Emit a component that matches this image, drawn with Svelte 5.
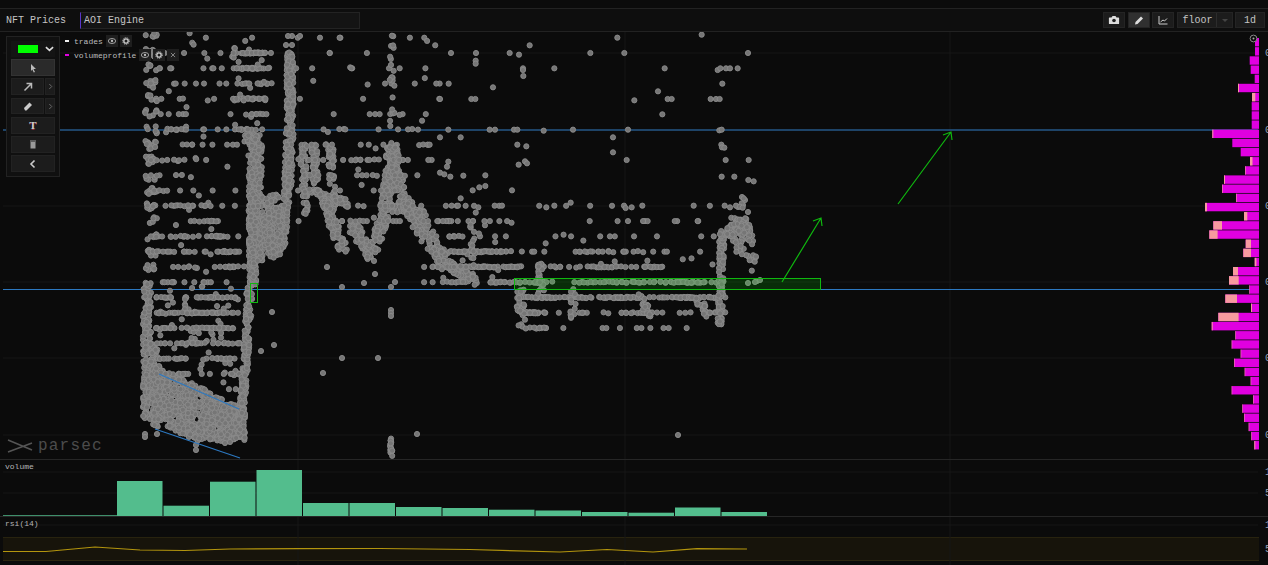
<script lang="ts">
  // seeded random so the scatter stays the same on every load
  let seed = 20231;
  function rnd() {
    seed = (seed + 0x6d2b79f5) | 0;
    let t = Math.imul(seed ^ (seed >>> 15), 1 | seed);
    t = (t + Math.imul(t ^ (t >>> 7), 61 | t)) ^ t;
    return ((t ^ (t >>> 14)) >>> 0) / 4294967296;
  }
  const between = (a: number, b: number) => a + rnd() * (b - a);
  const snap = (y: number) => 53 + Math.round((y - 53) / 15.28) * 15.28;

  const trades: number[][] = [];

  function line(x1, y1, x2, y2, n, jx = 2, jy = 2) {
    for (let i = 0; i < n; i++) {
      const t = rnd();
      trades.push([x1 + (x2 - x1) * t + between(-jx, jx), y1 + (y2 - y1) * t + between(-jy, jy)]);
    }
  }
  function scatter(x1, x2, y1, y2, n, snapped = 0.85) {
    for (let i = 0; i < n; i++) {
      const y = between(y1, y2);
      trades.push([between(x1, x2), rnd() < snapped ? snap(y) : y]);
    }
  }
  function runs(x1, x2, y1, y2, n, maxLen = 4) {
    for (let i = 0; i < n; i++) {
      let x = between(x1, x2);
      const y = snap(between(y1, y2));
      const len = 2 + Math.floor(rnd() * maxLen);
      for (let k = 0; k < len; k++) {
        trades.push([x, y + between(-0.6, 0.6)]);
        x += between(3.5, 6);
      }
    }
  }

  // left wall and bottom blob
  line(147, 282, 147, 420, 190, 4, 2);
  line(154, 340, 156, 425, 80, 3.5, 3);
  for (let i = 0; i < 800; i++) {
    const x = between(152, 245);
    const top = 362 + (x - 152) * 0.52;
    const bottom = x < 195 ? 418 + (x - 152) * 0.55 : 442 - (x - 195) * 0.04;
    trades.push([x, between(top, bottom)]);
  }
  trades.push([196, 450], [196, 445], [145, 434], [145, 437], [157, 434], [225, 443], [230, 442]);
  scatter(156, 240, 284, 385, 190, 0.7);
  runs(156, 225, 284, 360, 26, 3);

  // right side of the drop
  line(250, 285, 241, 432, 210, 3, 2);
  line(253, 285, 252, 200, 130, 3.5, 2);
  line(256, 265, 255, 145, 280, 7, 2);
  line(252, 145, 252, 130, 30, 8, 2);
  runs(236, 262, 52, 130, 22, 3);
  scatter(232, 268, 32, 130, 45, 0.7);
  runs(244, 262, 53, 53, 3, 5);

  // tall column and the W after it
  line(290, 53, 290, 130, 140, 3.5, 2);
  line(290, 130, 287, 205, 110, 4, 2);
  line(285, 205, 282, 250, 70, 3.5, 2);
  line(273, 195, 275, 255, 130, 7, 3);
  line(264, 210, 270, 255, 50, 5, 3);
  line(303, 140, 305, 215, 60, 3, 2);
  line(314, 145, 316, 195, 40, 3, 2);
  line(331, 145, 333, 215, 55, 3, 2);
  line(310, 190, 350, 205, 55, 4, 3);
  line(325, 200, 343, 250, 90, 5, 3);
  line(352, 225, 372, 258, 70, 5, 4);
  line(372, 255, 385, 215, 60, 5, 4);
  line(385, 215, 392, 145, 120, 5, 3);
  line(392, 145, 403, 205, 90, 5, 3);
  line(380, 206, 425, 214, 50, 3, 4);
  line(403, 200, 445, 262, 150, 6, 6);
  line(445, 262, 475, 283, 55, 7, 3);
  runs(300, 420, 130, 235, 14, 2);
  scatter(296, 440, 130, 230, 70, 0.8);
  scatter(296, 440, 32, 128, 40, 0.85);
  trades.push([292, 36], [288, 36], [286, 45], [292, 45], [300, 36]);

  // left column, sparse rows between the walls
  for (const y of [37, 53, 68, 84, 99, 114, 130, 145, 160, 176, 191, 206, 221, 237, 252, 267]) {
    const n = 5 + Math.floor(rnd() * 9);
    for (let k = 0; k < n; k++) trades.push([between(145, 157), y + between(-4, 4)]);
  }
  scatter(158, 240, 32, 280, 120, 0.85);
  runs(145, 232, 206, 270, 26, 3);
  runs(145, 185, 130, 205, 10, 2);

  // stair down into the range
  runs(430, 515, 252, 282, 30, 3);
  scatter(420, 515, 206, 282, 60, 0.7);
  runs(440, 480, 236, 267, 10, 3);
  line(472, 225, 474, 282, 20, 2, 2);

  // the range
  runs(515, 715, 282, 313, 60, 4);
  runs(515, 700, 252, 282, 30, 3);
  scatter(515, 715, 206, 265, 50, 0.85);
  scatter(515, 715, 298, 328, 30, 0.9);
  runs(516, 540, 313, 328, 8, 3);
  runs(615, 650, 313, 313, 3, 5);
  line(520, 290, 522, 330, 30, 4, 2);
  line(541, 263, 541, 292, 22, 3, 2);
  line(573, 290, 573, 320, 14, 3, 2);
  line(640, 295, 650, 318, 22, 4, 2);
  line(695, 295, 708, 315, 24, 4, 2);

  // last push up
  line(720, 325, 722, 235, 110, 2.5, 2);
  line(722, 235, 745, 222, 40, 4, 4);
  line(738, 222, 745, 230, 50, 7, 6);
  line(745, 228, 755, 270, 22, 5, 3);
  line(730, 235, 742, 250, 22, 5, 6);
  trades.push([748, 283], [757, 281], [760, 280], [755, 282], [748, 212], [743, 205], [738, 207], [742, 197], [745, 200]);

  // stray prints
  const strays = [[327, 267], [375, 274], [342, 287], [395, 282], [391, 287], [391, 310], [391, 313], [391, 316], [272, 312], [274, 345], [261, 351], [342, 358], [378, 358], [323, 373], [417, 434], [678, 435], [364, 283]];
  line(391, 440, 391, 456, 20, 1.2, 2);
  trades.push(...strays);
  line(392, 32, 392, 128, 22, 2.5, 2);

  // read off the quiet area around the top right
  const quiet = [[785,14],[532,23],[269,46],[33,69],[108,69],[209,69],[237,74],[451,69],[553,69],[924,69],[107,92],[107,101],[249,115],[249,120],[343,115],[674,115],[833,120],[841,115],[858,115],[870,115],[893,115],[250,138],[26,161],[159,172],[847,161],[654,184],[0,207],[94,207],[106,207],[583,211],[683,207],[695,207],[812,207],[828,207],[839,207],[667,253],[25,299],[149,299],[165,299],[222,299],[232,299],[311,302],[399,299],[564,299],[838,301],[845,299],[0,322],[62,322],[519,322],[232,344],[259,349],[844,344],[846,352],[853,353],[519,367],[560,390],[857,390],[926,390],[25,395],[21,410],[255,394],[261,400],[236,404],[0,428],[13,433],[31,440],[70,437],[136,436],[845,440],[883,440],[925,450],[941,454],[136,468],[118,472],[98,481],[216,481],[62,505],[911,505],[35,527],[54,527],[115,532],[164,527],[186,527],[319,532],[343,527],[392,518],[552,527],[557,534],[575,532],[607,527],[761,527],[854,527],[870,532],[888,527],[905,520],[900,530],[908,533]];
  for (const [x, y] of quiet) trades.push([440 + x / 3, 30 + y / 3]);

  const dots = trades.filter(([x, y]) => y > 30);

  // volume profile: total width, pink part
  const profile = [
    [4, 0], [4, 0], [9.3, 0], [8.3, 0], [4.3, 0], [21, 1], [7, 3.3], [7.3, 0], [7.3, 0], [7.3, 0],
    [46.7, 1], [26.7, 0], [18.3, 0], [9, 2.5], [14, 0.6], [35, 1], [37, 0.6], [23, 0.6], [54, 2], [15, 3.3],
    [45.7, 8.7], [49.7, 8.3], [13.3, 5.3], [15.7, 7.7], [4.3, 1.7], [26, 5], [30, 9.7], [9.7, 0.5], [33.7, 11.7], [8, 1],
    [40.7, 20.3], [47.3, 1], [23.7, 0.5], [27.3, 0.5], [18.3, 0.5], [25, 0.5], [14.3, 0.5], [8.3, 0.5], [27.3, 0.5], [6, 0.5],
    [16.7, 0.5], [15, 0.5], [10.3, 0.5], [7.7, 0.5], [4.7, 1]
  ];

  const chartGrid = [53, 130, 206, 282, 358, 435];
  const verticals = [298, 625, 950];

  const volumeTops = [481, 505.7, 481.7, 470, 503, 503, 507, 508, 509.7, 510.5, 512, 512.7, 507.5, 512];

  const rsi = "3,551.5 46,551.5 95,547 140,550 185,550.5 230,549 300,548.7 380,548.5 470,549.5 560,552 607,549.5 653,552 697,548.7 747,549";

  const tools = ["cursor", "arrow", "pencil", "text", "trash", "back"];
</script>

{#snippet eye()}
  <svg viewBox="0 0 12 12" class="mini"><ellipse cx="6" cy="6" rx="4.4" ry="3" fill="none" stroke="#bbb" stroke-width="1"/><circle cx="6" cy="6" r="1.4" fill="#bbb"/></svg>
{/snippet}
{#snippet gear()}
  <svg viewBox="0 0 12 12" class="mini"><circle cx="6" cy="6" r="2.6" fill="none" stroke="#ccc" stroke-width="1.6"/><circle cx="6" cy="6" r="4" fill="none" stroke="#ccc" stroke-width="1.1" stroke-dasharray="1.3 1.2"/></svg>
{/snippet}

<div class="app">
  <div class="topstrip"></div>
  <header>
    <span class="title">NFT Prices</span>
    <div class="search">AOI Engine</div>
    <div class="actions">
      <button class="btn icon" aria-label="snapshot">
        <svg viewBox="0 0 12 12" width="12" height="12"><path d="M1.5 3.5h2l1-1.5h3l1 1.5h2a.6.6 0 0 1 .6.6v5.3a.6.6 0 0 1-.6.6h-9a.6.6 0 0 1-.6-.6V4.100a.6.6 0 0 1 .6-.6z" fill="#ddd"/><circle cx="6" cy="6.500" r="1.800" fill="#222"/></svg>
      </button>
      <button class="btn icon active" aria-label="draw">
        <svg viewBox="0 0 12 12" width="12" height="12"><path d="M2 10.500l.5-2.500 5.500-5.500 2 2-5.500 5.500z" fill="#ddd"/></svg>
      </button>
      <button class="btn icon" aria-label="chart">
        <svg viewBox="0 0 12 12" width="12" height="12"><path d="M2 2v8h8.500M3.500 8l2.500-2 1.500 1L10 4.500" fill="none" stroke="#ccc" stroke-width="1"/></svg>
      </button>
      <div class="btn select"><span>floor</span><i></i></div>
      <div class="btn period">1d</div>
    </div>
  </header>

  <section class="pane main">
    <svg class="canvas" viewBox="0 32 1268 427" width="1268" height="427">
      {#each chartGrid as y}<line x1="3" x2="1258" y1={y} y2={y} class="grid"/>{/each}
      {#each verticals as x}<line x1={x} x2={x} y1="32" y2="459" class="grid"/>{/each}
      {#each chartGrid as y}<text x="1265" y={y + 3} class="axis">0</text>{/each}

      <line x1="3" x2="1258" y1="130" y2="130" class="level"/>
      <line x1="3" x2="1258" y1="289.500" y2="289.500" class="level"/>

      {#each dots as [x, y]}<circle cx={x} cy={y} r="2.600" class="dot"/>{/each}

      <line x1="159" y1="374" x2="239" y2="409" class="trend"/>
      <line x1="155" y1="429" x2="240" y2="458" class="trend"/>

      <rect x="514.500" y="278.500" width="306" height="11" class="zone"/>
      <rect x="250.500" y="283.500" width="7" height="19" class="zone thin"/>
      <path d="M782 282 821 218M813 221l8-3 1 8" class="arrow"/>
      <path d="M898 204 951 132M943 135l8-3 1 8" class="arrow"/>

      {#each profile as [w, pink], i}
        <g>
          <rect x={1259 - w} y={38 + i * 9.16} width={w} height="8.400" fill="#e000e0"/>
          {#if pink}<rect x={1259 - w} y={38 + i * 9.16} width={pink} height="8.400" fill="#f79a9f"/>{/if}
        </g>
      {/each}

      <circle cx="1253.500" cy="38.500" r="3.400" fill="#0b0b0b" stroke="#888" stroke-width="1"/>
      <circle cx="1253.500" cy="38.500" r="1" fill="#aaa"/>
    </svg>

    <aside class="toolbar">
      <div class="swatch-row">
        <span class="swatch"></span>
        <svg viewBox="0 0 10 6" width="9" height="6"><path d="M1 1l4 3.500L9 1" fill="none" stroke="#ddd" stroke-width="1.800"/></svg>
      </div>
      {#each tools as tool}
        <div class="tool-row">
          <button class="tool" class:selected={tool === "cursor"} aria-label={tool}>
            {#if tool === "cursor"}
              <svg viewBox="0 0 10 10" width="10" height="10"><path d="M3 1l5 5H5.500L7 9 5.800 9.500 4.300 6.500 3 8z" fill="#bbb"/></svg>
            {:else if tool === "arrow"}
              <svg viewBox="0 0 10 10" width="10" height="10"><path d="M1.500 8.500 8 2M3.500 1.500H8.500V6.500" fill="none" stroke="#bbb" stroke-width="1.500"/></svg>
            {:else if tool === "pencil"}
              <svg viewBox="0 0 10 10" width="10" height="10"><path d="M1 7l5.500-5.500 2.500 2.500-5.500 5.500H2z" fill="#ccc"/></svg>
            {:else if tool === "text"}
              <span class="t">T</span>
            {:else if tool === "trash"}
              <svg viewBox="0 0 10 10" width="10" height="10"><path d="M2 1.500h6v1H2zM2.500 3h5v6.500h-5z" fill="#999"/></svg>
            {:else}
              <svg viewBox="0 0 10 10" width="10" height="10"><path d="M6.500 1.500 3 5l3.500 3.500" fill="none" stroke="#ccc" stroke-width="1.600"/></svg>
            {/if}
          </button>
          {#if tool === "arrow" || tool === "pencil"}
            <button class="more" aria-label="more">
              <svg viewBox="0 0 6 8" width="5" height="7"><path d="M1.500 1 4.500 4l-3 3" fill="none" stroke="#777" stroke-width="1"/></svg>
            </button>
          {/if}
        </div>
      {/each}
    </aside>

    <div class="legend">
      <div class="legend-row">
        <i class="dash white"></i><span>trades</span>
        <b>{@render eye()}</b><b>{@render gear()}</b>
      </div>
      <div class="legend-row">
        <i class="dash magenta"></i><span>volumeprofile</span>
        <b>{@render eye()}</b><b>{@render gear()}</b>
        <b><svg viewBox="0 0 12 12" class="mini"><path d="M3.500 3.500l5 5M8.500 3.500l-5 5" stroke="#999" stroke-width="1"/></svg></b>
      </div>
    </div>

    <div class="watermark">
      <svg viewBox="0 0 26 14" width="26" height="14"><path d="M1 1 25 11M1 13 25 4" fill="none" stroke="#555" stroke-width="1.500"/></svg>
      <span>parsec</span>
    </div>
  </section>

  <section class="pane volume">
    <span class="pane-label">volume</span>
    <svg class="canvas" viewBox="0 460 1268 56" width="1268" height="56">
      <line x1="3" x2="1258" y1="472" y2="472" class="grid"/>
      <line x1="3" x2="1258" y1="493" y2="493" class="grid"/>
      {#each verticals as x}<line x1={x} x2={x} y1="460" y2="516" class="grid"/>{/each}
      <text x="1265" y="475" class="axis">1</text>
      <text x="1265" y="496" class="axis">5</text>
      <rect x="3" y="515" width="114" height="1" fill="#3f8f6b"/>
      {#each volumeTops as top, i}
        <rect x={117 + i * 46.500} y={top} width="45.500" height={516 - top} fill="#53bd8d"/>
      {/each}
    </svg>
  </section>

  <section class="pane rsi">
    <span class="pane-label">rsi(14)</span>
    <svg class="canvas" viewBox="0 517 1268 48" width="1268" height="48">
      <rect x="3" y="537" width="1256" height="23" fill="#17140b"/>
      <line x1="3" x2="1259" y1="537.500" y2="537.500" stroke="#28230f"/>
      <line x1="3" x2="1259" y1="560.500" y2="560.500" stroke="#2c2610"/>
      <line x1="3" x2="1258" y1="525" y2="525" class="grid"/>
      {#each verticals as x}<line x1={x} x2={x} y1="517" y2="565" class="grid"/>{/each}
      <text x="1265" y="528" class="axis">1</text>
      <text x="1265" y="552" class="axis">5</text>
      <polyline points={rsi} fill="none" stroke="#b3950e" stroke-width="1.200"/>
    </svg>
  </section>
</div>

<style>
  :global(body) {
    background: #0b0b0b;
  }
  .app {
    width: 1268px;
    height: 565px;
    overflow: hidden;
    display: flex;
    flex-direction: column;
    background: #0b0b0b;
    color: #c8c8c8;
    font-family: "Liberation Mono", monospace;
  }
  .topstrip {
    height: 8px;
    border-bottom: 1px solid #222;
    flex: none;
  }
  header {
    height: 22px;
    flex: none;
    display: flex;
    align-items: center;
    border-bottom: 1px solid #222;
    background: #0e0e0e;
    padding-left: 6px;
    font-size: 10px;
  }
  .title {
    width: 74px;
    color: #c4c4c4;
  }
  .search {
    width: 275px;
    height: 15px;
    line-height: 15px;
    padding-left: 3px;
    background: #141414;
    border: 1px solid #232323;
    border-left: 1px solid #5b36c9;
    color: #c4c4c4;
  }
  .actions {
    margin-left: auto;
    display: flex;
    gap: 2.500px;
    margin-right: 3px;
  }
  .btn {
    height: 16px;
    background: #1c1c1c;
    border: 1px solid #242424;
    box-sizing: border-box;
    padding: 0;
    display: flex;
    align-items: center;
    justify-content: center;
    color: #c4c4c4;
    font-size: 10px;
    font-family: "Liberation Mono", monospace;
  }
  .icon {
    width: 22px;
  }
  .active {
    background: #303030;
  }
  .select {
    width: 56px;
    justify-content: flex-start;
    padding-left: 5px;
    position: relative;
  }
  .select span {
    width: 36px;
  }
  .select i {
    width: 15px;
    height: 14px;
    border-left: 1px solid #2c2c2c;
    position: relative;
  }
  .select i::after {
    content: "";
    position: absolute;
    left: 5px;
    top: 6px;
    border: 3px solid transparent;
    border-top-color: #444;
  }
  .period {
    width: 30px;
  }
  .pane {
    position: relative;
    flex: none;
    border-bottom: 1px solid #262626;
  }
  .main {
    height: 427px;
  }
  .volume {
    height: 56px;
  }
  .rsi {
    height: 48px;
    border-bottom: 0;
  }
  .canvas {
    display: block;
  }
  .grid {
    stroke: #171717;
    stroke-width: 1;
  }
  .axis {
    font-size: 10px;
    fill: #9aa3b5;
    font-family: "Liberation Mono", monospace;
  }
  .level {
    stroke: #2c78c0;
    stroke-width: 1;
  }
  .trend {
    stroke: #2c78c0;
    stroke-width: 1.200;
  }
  .dot {
    fill: #767676;
    stroke: #8c8c8c;
    stroke-width: 0.900;
  }
  .zone {
    fill: rgba(0, 255, 0, 0.14);
    stroke: #0fb80f;
    stroke-width: 1;
  }
  .zone.thin {
    fill: none;
  }
  .arrow {
    fill: none;
    stroke: #0fb80f;
    stroke-width: 1.200;
  }
  .toolbar {
    position: absolute;
    left: 6px;
    top: 4px;
    width: 54px;
    height: 141px;
    box-sizing: border-box;
    padding: 4px;
    background: #101010;
    border: 1px solid #222;
    display: flex;
    flex-direction: column;
    gap: 2.500px;
  }
  .swatch-row {
    height: 16px;
    display: flex;
    align-items: center;
    gap: 7px;
    padding-left: 7px;
    background: #141414;
  }
  .swatch {
    width: 20px;
    height: 8px;
    background: #00ff00;
  }
  .tool-row {
    display: flex;
    gap: 1px;
    height: 17px;
  }
  .tool {
    flex: 1;
    padding: 0;
    background: #1c1c1c;
    border: 1px solid #222;
    display: flex;
    align-items: center;
    justify-content: center;
  }
  .tool.selected {
    background: #2a2a2a;
    border-color: #333;
  }
  .more {
    width: 10px;
    padding: 0;
    background: #1c1c1c;
    border: 1px solid #222;
    display: flex;
    align-items: center;
    justify-content: center;
  }
  .t {
    font-family: "Liberation Serif", serif;
    font-weight: 700;
    font-size: 11px;
    color: #ccc;
    text-shadow: 0 1px 0 #8a2a3a;
  }
  .legend {
    position: absolute;
    left: 65px;
    top: 3px;
    font-size: 8px;
    color: #bdbdbd;
    display: flex;
    flex-direction: column;
    gap: 2px;
  }
  .legend-row {
    display: flex;
    align-items: center;
    height: 12px;
  }
  .legend-row span {
    margin-right: 3px;
  }
  .legend-row b {
    width: 12px;
    height: 12px;
    background: #1e1e1e;
    margin-right: 2px;
    display: flex;
    align-items: center;
    justify-content: center;
  }
  .mini {
    width: 10px;
    height: 10px;
  }
  .dash {
    width: 4px;
    height: 2px;
    margin-right: 5px;
  }
  .white {
    background: #eee;
  }
  .magenta {
    background: #e000e0;
  }
  .watermark {
    position: absolute;
    left: 7px;
    top: 405px;
    display: flex;
    align-items: center;
    gap: 5px;
    color: #4c4c4c;
    font-size: 16px;
    letter-spacing: 1.200px;
  }
  .pane-label {
    position: absolute;
    left: 5px;
    top: 2px;
    font-size: 8px;
    color: #b5b5b5;
    z-index: 1;
  }
</style>
